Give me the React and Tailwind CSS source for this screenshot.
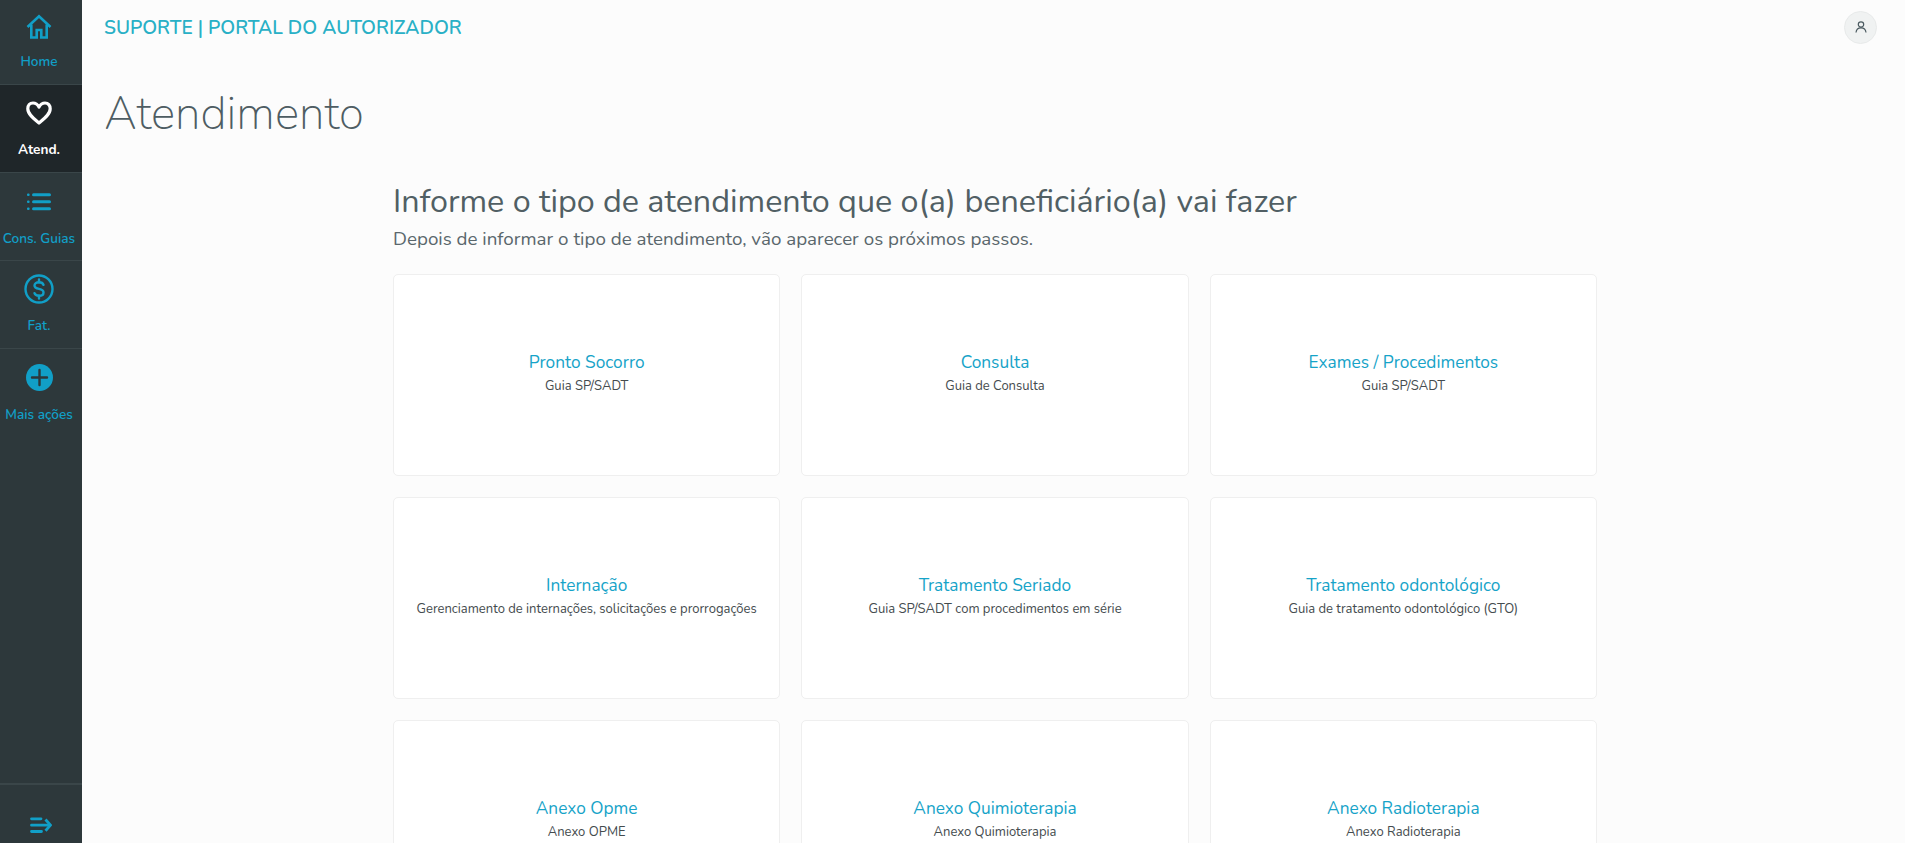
const CARDS = [
  ["Pronto Socorro", "Guia SP/SADT"],
  ["Consulta", "Guia de Consulta"],
  ["Exames / Procedimentos", "Guia SP/SADT"],
  ["Internação", "Gerenciamento de internações, solicitações e prorrogações"],
  ["Tratamento Seriado", "Guia SP/SADT com procedimentos em série"],
  ["Tratamento odontológico", "Guia de tratamento odontológico (GTO)"],
  ["Anexo Opme", "Anexo OPME"],
  ["Anexo Quimioterapia", "Anexo Quimioterapia"],
  ["Anexo Radioterapia", "Anexo Radioterapia"],
];

const HomeIcon = () => (
  <svg width="26" height="25" viewBox="0 0 26 25" fill="none" stroke="currentColor" strokeWidth="2.6" strokeLinejoin="miter">
    <path d="M1.500 13 13 2.200 24.500 13" />
    <path d="M5.300 10.500V23.500h5.400v-7.500h4.600v7.500h5.400V10.500" />
  </svg>
);
const HeartIcon = () => (
  <svg width="26" height="24" viewBox="0 0 26 24" fill="none" stroke="currentColor" strokeWidth="3.2" strokeLinejoin="round">
    <path d="M13 6C11.500 3.200 9.500 2 7 2 3.800 2 1.800 4.400 1.800 7.800c0 5.600 6.400 10.400 11.200 14.200 4.800-3.800 11.200-8.600 11.200-14.200C24.200 4.400 22.200 2 19 2 16.500 2 14.500 3.200 13 6Z" />
  </svg>
);
const ListIcon = () => (
  <svg width="24" height="18" viewBox="0 0 24 18" fill="currentColor">
    <rect x="0" y="0.500" width="2.600" height="2.600" rx="1" />
    <rect x="0" y="7.500" width="2.600" height="2.600" rx="1" />
    <rect x="0" y="14.500" width="2.600" height="2.600" rx="1" />
    <rect x="5" y="0.200" width="19" height="3" rx="1.500" />
    <rect x="5" y="7.200" width="19" height="3" rx="1.500" />
    <rect x="5" y="14.200" width="19" height="3" rx="1.500" />
  </svg>
);
const DollarIcon = () => (
  <svg width="30" height="30" viewBox="0 0 30 30" fill="none" stroke="currentColor" strokeWidth="2.400" strokeLinecap="round">
    <circle cx="15" cy="15" r="13.500" />
    <path d="M19.500 10.800c-.5-1.600-2.200-2.600-4.500-2.600-2.700 0-4.500 1.300-4.500 3.300s1.800 2.900 4.500 3.400 4.500 1.500 4.500 3.500-1.800 3.400-4.500 3.400c-2.300 0-4-1-4.500-2.600" />
    <path d="M15 5.500v2.700M15 21.800v2.700" />
  </svg>
);
const PlusIcon = () => (
  <svg width="27" height="27" viewBox="0 0 27 27">
    <circle cx="13.500" cy="13.500" r="13.500" fill="currentColor" />
    <path d="M13.500 6v15M6 13.500h15" stroke="#2d383b" strokeWidth="2.400" strokeLinecap="round" />
  </svg>
);
const CollapseIcon = () => (
  <svg width="22" height="16" viewBox="0 0 22 16" fill="none" stroke="currentColor" strokeWidth="2.800" strokeLinecap="round">
    <path d="M1.500 1.800h9.500M1.500 8.200h18M1.500 14.500h10" />
    <path d="M15.500 2.500 20.500 8.200 15.500 13.800" strokeLinecap="butt" />
  </svg>
);
const UserIcon = () => (
  <svg width="12" height="12" viewBox="0 0 12 12" fill="none" stroke="#4b5a60" strokeWidth="1.200">
    <circle cx="6" cy="3.500" r="2.700" />
    <path d="M1 11.500C1.300 8.500 3.300 6.800 6 6.800s4.700 1.700 5 4.700" />
  </svg>
);

function NavItem({ icon, label, active, last, height = "h-[88px]", iconBox = "h-[57px]", labelGap = "mt-[1px]" }) {
  return (
    <div
      className={
        "pr-[4px] flex flex-col items-center " + height + " " +
        (last ? "" : "border-b border-[#3a4649] ") +
        (active ? "bg-[#1f2629] text-white font-bold" : "text-[#119fc7] font-semibold")
      }
    >
      <div className={"flex items-center justify-center shrink-0 " + iconBox}>{icon}</div>
      <div className={"text-[13.600px] leading-[16px] whitespace-nowrap " + labelGap}>{label}</div>
    </div>
  );
}

export default function App() {
  return (
    <div className="h-screen flex overflow-hidden bg-[#fcfcfc] font-['Nunito','Lato','Noto_Sans',sans-serif]">
      <aside className="w-[82px] shrink-0 h-full bg-[#2d383b] flex flex-col">
        <NavItem icon={<HomeIcon />} label="Home" height="h-[85px]" iconBox="h-[52px]" labelGap="mt-[2px]" />
        <NavItem icon={<HeartIcon />} label="Atend." active iconBox="h-[56px]" />
        <NavItem icon={<ListIcon />} label="Cons. Guias" />
        <NavItem icon={<DollarIcon />} label="Fat." iconBox="h-[56px]" />
        <NavItem icon={<PlusIcon />} label="Mais ações" last />
        <div className="mt-auto h-[60px] border-t-2 border-[#3a4649] flex items-center justify-center text-[#119fc7] pt-[22px]">
          <CollapseIcon />
        </div>
      </aside>
      <main className="flex-1 min-w-0 h-full overflow-hidden">
        <header className="h-[54px] pl-[22px] pr-[28px] flex items-center justify-between">
          <div className="text-[19.200px] font-semibold text-[#29b0c6] pt-[3px]">SUPORTE | PORTAL DO AUTORIZADOR</div>
          <div className="w-[33px] h-[33px] rounded-full bg-[#f0f2f2] border border-[#e8eaea] flex items-center justify-center"><UserIcon /></div>
        </header>
        <h1 className="pl-[22px] text-[46px] leading-[60px] font-extralight text-[#4e5d63] mt-[30px]">Atendimento</h1>
        <section className="w-[1204px] ml-[311px] mt-[35px]">
          <h2 className="text-[32.300px] leading-[44px] text-[#515f64] font-normal">Informe o tipo de atendimento que o(a) beneficiário(a) vai fazer</h2>
          <p className="text-[18.800px] leading-[26px] text-[#5a676c] mt-[3px]">Depois de informar o tipo de atendimento, vão aparecer os próximos passos.</p>
          <div className="grid grid-cols-3 gap-x-[21px] gap-y-[21px] mt-[22px]">
            {CARDS.map(([title, sub]) => (
              <div key={title} className="h-[202px] bg-white border border-[#efefef] rounded-[5px] flex flex-col items-center justify-center pb-[3px]">
                <div className="text-[17.300px] leading-[22px] mb-[2px] text-[#16a3c8]">{title}</div>
                <div className="text-[13px] leading-[20px] text-[#444b4e]">{sub}</div>
              </div>
            ))}
          </div>
        </section>
      </main>
    </div>
  );
}
